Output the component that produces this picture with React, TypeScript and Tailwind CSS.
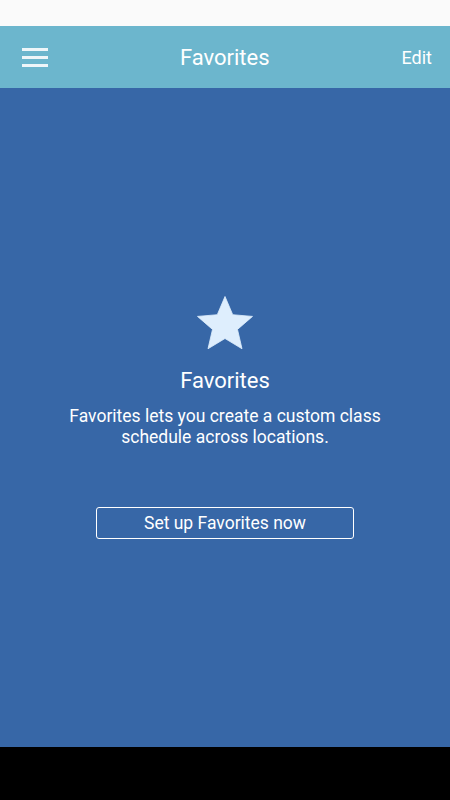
const StarIcon = () => (
  <svg width="66" height="66" viewBox="0 0 24 24" className="block">
    <path
      d="M12 17.27L18.18 21l-1.64-7.03L22 9.24l-7.19-.61L12 2 9.19 8.63 2 9.24l5.46 4.73L5.82 21z"
      fill="#deeefd"
      stroke="#deeefd"
      strokeWidth="0.3"
      strokeLinejoin="round"
    />
  </svg>
);

const App: React.FC = () => {
  return (
    <div className="w-[450px] h-[800px] flex flex-col font-['Roboto',sans-serif] text-white">
      <div className="h-[26px] bg-[#fafafa]" />
      <header className="h-[62px] bg-[#6cb6cd] flex items-center justify-between pl-[22px] pr-[18px] pt-[2px]">
        <div className="w-[26px] flex flex-col gap-[5px] -mt-[2px]">
          <span className="h-[3px] bg-[#eef6f9]" />
          <span className="h-[3px] bg-[#eef6f9]" />
          <span className="h-[3px] bg-[#eef6f9]" />
        </div>
        <h1 className="text-[22px] leading-[28px]">Favorites</h1>
        <button className="text-[18px] leading-[24px]">Edit</button>
      </header>
      <main className="h-[659px] bg-[#3767a7] flex flex-col items-center pt-[203px]">
        <StarIcon />
        <h2 className="mt-[10px] text-[22px] leading-[28px]">Favorites</h2>
        <p className="mt-[11px] text-[17.5px] leading-[21px] text-center w-[360px]">
          Favorites lets you create a custom class schedule across locations.
        </p>
        <button className="mt-[59px] w-[258px] h-[32px] border border-white rounded-[3px] text-[17.5px]">
          Set up Favorites now
        </button>
      </main>
      <div className="flex-1 bg-black" />
    </div>
  );
};

export default App;
